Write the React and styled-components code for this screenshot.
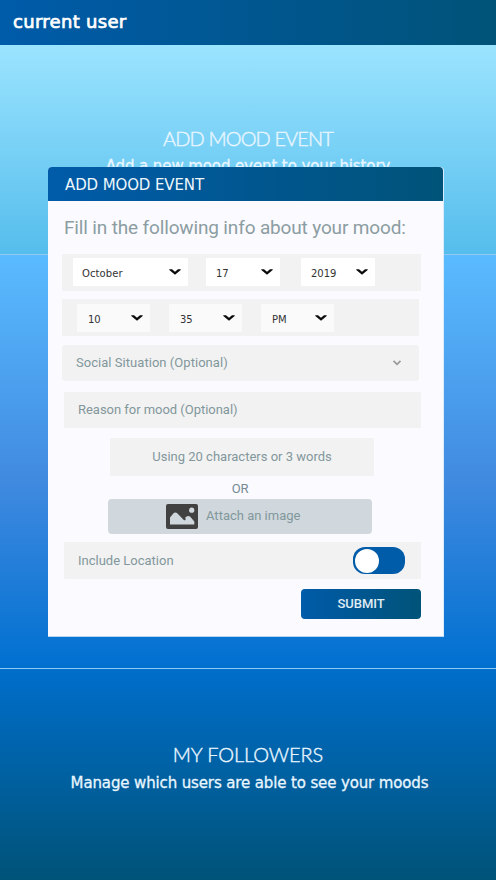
import React from "react";
import styled, { createGlobalStyle } from "styled-components";

const GlobalStyle = createGlobalStyle`
  * { box-sizing: border-box; }
  body { margin: 0; background: #005bab; }
`;

const brand = "linear-gradient(90deg, #005ba9, #005378)";

const Screen = styled.main`
  position: relative;
  display: flex;
  flex-direction: column;
  width: 496px;
  height: 880px;
  overflow: hidden;
  font-family: Roboto, sans-serif;
`;

const TopBar = styled.header`
  height: 45px;
  padding-left: 13px;
  background: ${brand};
  border-top-left-radius: 3px;
  color: #fff;
  font: 18px/43px "DejaVu Sans", sans-serif;
  letter-spacing: ${(p) => p.$spacing}px;
  -webkit-text-stroke: 0.7px currentColor;
  white-space: nowrap;
`;

const Section = styled.section`
  height: ${(p) => p.$height}px;
  padding-top: ${(p) => p.$top || 0}px;
  background: ${(p) => p.$fill};
  border-top: ${(p) => (p.$divided ? "1px solid #8fc9f4" : "none")};
  color: #e9f6ff;
  text-align: center;
  white-space: nowrap;
`;

const SectionTitle = styled.h2`
  margin: 0;
  font: 300 20px/28px Lato, sans-serif;
  letter-spacing: ${(p) => p.$spacing}px;
  -webkit-text-stroke: 0.4px currentColor;
`;

const SectionText = styled.p`
  margin: 0;
  padding-left: ${(p) => p.$shift || 0}px;
  font: 15px/${(p) => p.$line || 28}px "DejaVu Sans", sans-serif;
  letter-spacing: ${(p) => p.$spacing}px;
  -webkit-text-stroke: 0.3px currentColor;
`;

const Dialog = styled.div`
  position: absolute;
  left: 48px;
  top: 167px;
  display: flex;
  flex-direction: column;
  width: 396px;
  height: 470px;
  background: #fbfaff;
  border-radius: 4px 4px 0 0;
  border-right: 1px solid #d8ebff;
  border-bottom: 1px solid #b4d5f4;
  white-space: nowrap;
`;

const DialogHeader = styled.div`
  height: 34px;
  flex: none;
  padding-left: 17px;
  border-radius: 4px 4px 0 0;
  background: ${brand};
  color: #edf6fb;
  font: 15px/36px "DejaVu Sans", sans-serif;
  letter-spacing: ${(p) => p.$spacing}px;
`;

const Prompt = styled.p`
  margin: 0 0 0 16px;
  height: 53px;
  color: #8c9da2;
  font-size: 19px;
  line-height: 54px;
  letter-spacing: ${(p) => p.$spacing}px;
`;

const Row = styled.div`
  display: flex;
  flex: none;
  align-items: center;
  width: ${(p) => p.$width || 357}px;
  height: ${(p) => p.$height || 37}px;
  margin: ${(p) => p.$margin};
  padding: ${(p) => p.$padding || "0 16px 0 14px"};
  gap: ${(p) => p.$gap || 0}px;
  justify-content: ${(p) => p.$justify || "flex-start"};
  background: ${(p) => p.$fill || "#f2f2f2"};
  border-radius: ${(p) => p.$radius || 1}px;
`;

const Label = styled.span`
  color: #82979c;
  font-size: 13px;
  line-height: 20px;
  letter-spacing: ${(p) => p.$spacing}px;
`;

const Select = styled.div`
  display: flex;
  align-items: center;
  justify-content: space-between;
  width: ${(p) => p.$width || 74}px;
  height: 28px;
  margin-left: ${(p) => p.$gap || 0}px;
  padding: 0 7px 0 ${(p) => p.$inset || 10}px;
  background: ${(p) => p.$fill || "#fff"};
  color: #333;
  font: 10px/20px "DejaVu Sans", sans-serif;
  letter-spacing: ${(p) => p.$spacing || 0}px;

  span { padding-top: 4px; }
`;

const Or = styled.div`
  height: 23px;
  width: 384px;
  text-align: center;
  color: #788b95;
  font-size: 13px;
  line-height: 25px;
  letter-spacing: -0.2px;
`;

const Toggle = styled.div`
  width: 52px;
  height: 27px;
  padding: 1.5px 2px;
  border-radius: 12px;
  background: #005ba9;

  &::before {
    content: "";
    display: block;
    width: 24px;
    height: 24px;
    border-radius: 50%;
    background: #fff;
  }
`;

const Submit = styled.button`
  align-self: flex-end;
  width: 120px;
  height: 30px;
  margin: 10px 22px 0 0;
  padding: 0;
  border: 0;
  border-radius: 4px;
  background: ${brand};
  color: #e1edf4;
  font: 500 13px/28px Roboto, sans-serif;
  letter-spacing: ${(p) => p.$spacing}px;
`;

const Icon = styled.svg`
  display: block;
  flex: none;
`;

const Caret = () => (
  <Icon width="12" height="8" viewBox="0 0 12 8">
    <path d="M0.3 1.3H3L6 3.8 9 1.3H11.7V2L6 6.8 0.3 2Z" fill="#0b0b0b" />
  </Icon>
);

const SoftCaret = () => (
  <Icon width="10" height="8" viewBox="0 0 10 8">
    <path d="M1.5 1.8L5 5.3 8.5 1.8" fill="none" stroke="#999" strokeWidth="1.7" />
  </Icon>
);

const PictureIcon = () => (
  <Icon width="32" height="25" viewBox="0 0 32 25">
    <rect width="32" height="25" rx="2" fill="#414141" />
    <path
      d="M4 20.5V13.5L7.5 9.3Q9.5 7.6 11.5 9.5L17.8 16Q19.8 17 19.6 15L19.2 13.6Q21.5 11 24 12.5L28.3 17.5V20.5Z"
      fill="#d0d8dd"
    />
    <circle cx="25.7" cy="6.2" r="2.6" fill="#d0d8dd" />
  </Icon>
);

const Picker = ({ value, ...rest }) => (
  <Select {...rest}>
    <span>{value}</span>
    <Caret />
  </Select>
);

export default function App() {
  return (
    <Screen>
      <GlobalStyle />
      <TopBar $spacing={0.3}>current user</TopBar>
      <Section $height={209} $top={79} $fill="linear-gradient(#9be4ff, #55bdec)">
        <SectionTitle $spacing={-0.9}>ADD MOOD EVENT</SectionTitle>
        <SectionText $spacing={-0.1}>Add a new mood event to your history</SectionText>
      </Section>
      <Section $height={414} $divided $fill="linear-gradient(#5abbff, #408ae0 55%, #0070d0)" />
      <Section $height={212} $top={71} $divided $fill="linear-gradient(#006ecb, #005378)">
        <SectionTitle $spacing={-0.1}>MY FOLLOWERS</SectionTitle>
        <SectionText $spacing={-0.13} $shift={3} $line={30}>
          Manage which users are able to see your moods
        </SectionText>
      </Section>
      <Dialog>
        <DialogHeader $spacing={-0.12}>ADD MOOD EVENT</DialogHeader>
        <Prompt $spacing={-0.15}>Fill in the following info about your mood:</Prompt>
        <Row $width={359} $margin="0 0 8px 14px" $padding="0 0 1px 11px">
          <Picker value="October" $width={115} $inset={9} $spacing={0.1} />
          <Picker value="17" $gap={18} />
          <Picker value="2019" $gap={21} />
        </Row>
        <Row $margin="0 0 9px 14px" $padding="0 0 0 15px">
          <Picker value="10" $inset={11} $width={73} $fill="#fafafa" />
          <Picker value="35" $inset={11} $width={73} $gap={19} $fill="#fafafa" />
          <Picker value="PM" $inset={11} $width={73} $gap={19} $fill="#fafafa" />
        </Row>
        <Row $height={36} $radius={3} $margin="0 0 11px 14px" $padding="0 17px 0 14px" $justify="space-between">
          <Label $spacing={0.04}>Social Situation (Optional)</Label>
          <SoftCaret />
        </Row>
        <Row $height={36} $margin="0 0 10px 16px">
          <Label $spacing={-0.03}>Reason for mood (Optional)</Label>
        </Row>
        <Row $width={264} $height={38} $margin="0 0 0 62px" $padding="0" $justify="center">
          <Label $spacing={0}>Using 20 characters or 3 words</Label>
        </Row>
        <Or>OR</Or>
        <Row $width={264} $height={35} $margin="0 0 8px 60px" $padding="0 0 1px 58px" $gap={8} $radius={4} $fill="#d0d8dd">
          <PictureIcon />
          <Label $spacing={0}>Attach an image</Label>
        </Row>
        <Row $margin="0 0 0 16px" $justify="space-between">
          <Label $spacing={0}>Include Location</Label>
          <Toggle />
        </Row>
        <Submit $spacing={-0.05}>SUBMIT</Submit>
      </Dialog>
    </Screen>
  );
}
